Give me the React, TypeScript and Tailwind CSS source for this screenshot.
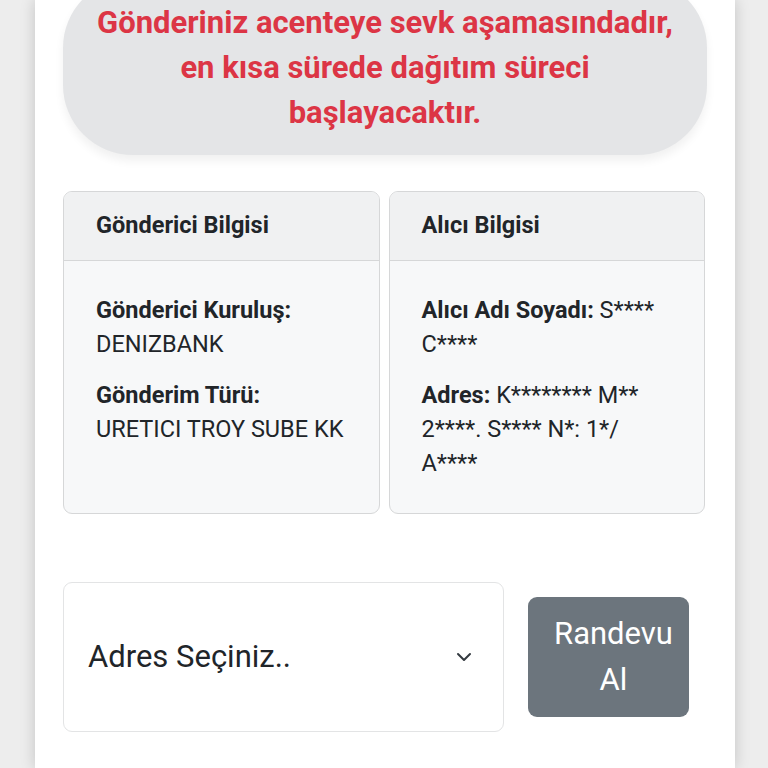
import { ChevronDown } from "lucide-react";

function InfoCard({ title, children }: { title: string; children: React.ReactNode }) {
  return (
    <div className="flex flex-col rounded-[9px] border border-[#d6d7d8] overflow-hidden bg-[#f7f8f9]">
      <div className="h-[69px] flex items-center px-[32px] bg-[#f0f1f2] border-b border-[#d6d7d8]">
        <h3 className="text-[23.5px] font-bold text-[#212529]">{title}</h3>
      </div>
      <div className="flex-1 px-[32px] pt-[32px] pb-[33px] text-[23.5px] leading-[34px] text-[#212529] space-y-[17px]">
        {children}
      </div>
    </div>
  );
}

export default function App() {
  return (
    <div
      className="h-[768px] overflow-hidden bg-[#ededed]"
      style={{ fontFamily: "Roboto, 'Liberation Sans', sans-serif" }}
    >
      <div className="ml-[35px] w-[700px] h-full flex flex-col bg-white shadow-[0_0_14px_rgba(0,0,0,0.18)] px-[28px]">
        {/* Status */}
        <div className="-mt-[22px] pt-[22px] pb-[20px] rounded-[70px] bg-[#e4e5e7] shadow-[0_6px_10px_rgba(0,0,0,0.06)] text-center">
          <p className="text-[31px] leading-[45px] font-bold text-[#dc3545]">
            Gönderiniz acenteye sevk aşamasındadır,
            <br />
            en kısa sürede dağıtım süreci
            <br />
            başlayacaktır.
          </p>
        </div>

        {/* Cards */}
        <div className="mt-[36px] grid grid-cols-2 gap-[9px] w-[642px]">
          <InfoCard title="Gönderici Bilgisi">
            <p>
              <span className="font-bold">Gönderici Kuruluş:</span>
              <br />
              DENIZBANK
            </p>
            <p>
              <span className="font-bold">Gönderim Türü:</span>
              <br />
              URETICI TROY SUBE KK
            </p>
          </InfoCard>
          <InfoCard title="Alıcı Bilgisi">
            <p>
              <span className="font-bold">Alıcı Adı Soyadı:</span> S****
              <br />
              C****
            </p>
            <p>
              <span className="font-bold">Adres:</span> K******** M**
              <br />
              2****. S**** N*: 1*/
              <br />
              A****
            </p>
          </InfoCard>
        </div>

        {/* Appointment */}
        <div className="mt-[68px] flex items-center gap-[24px]">
          <div className="w-[441px] h-[150px] rounded-[9px] border border-[#e3e4e5] bg-white flex items-center justify-between pl-[24px] pr-[27px]">
            <span className="text-[31px] text-[#212529]">Adres Seçiniz..</span>
            <ChevronDown className="w-[24px] h-[24px] text-[#343a40]" strokeWidth={2} />
          </div>
          <button className="w-[161px] h-[120px] rounded-[9px] bg-[#6c757d] text-white text-[31px] leading-[46px] pl-[24px] pr-[14px]">
            Randevu Al
          </button>
        </div>
      </div>
    </div>
  );
}
